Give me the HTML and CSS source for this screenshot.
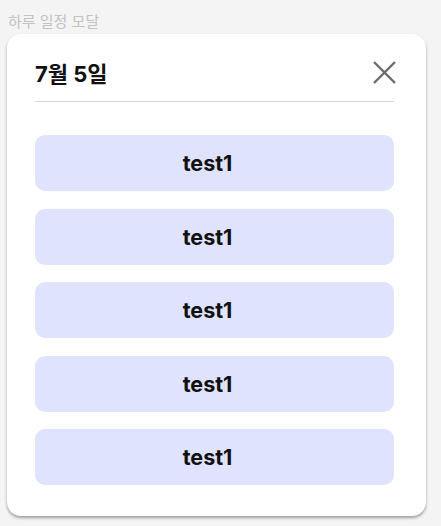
FILE: index.html
```html
<!DOCTYPE html>
<html lang="ko">
<head>
<meta charset="utf-8">
<link rel="stylesheet" href="styles.css">
</head>
<body>
<div class="label">하루 일정 모달</div>
<div class="modal">
  <div class="header">
    <h2 class="title">7월 5일</h2>
    <button class="close" aria-label="닫기">
      <svg width="25" height="25" viewBox="0 0 25 25"><path d="M2 2 L23 23 M23 2 L2 23" stroke="#6b6b6b" stroke-width="2.4" fill="none" stroke-linecap="butt"/></svg>
    </button>
  </div>
  <div class="list">
    <div class="item">test1</div>
    <div class="item">test1</div>
    <div class="item">test1</div>
    <div class="item">test1</div>
    <div class="item">test1</div>
  </div>
</div>
</body>
</html>
```
FILE: styles.css
```css
html, body {
  margin: 0;
  background: #f4f4f4;
}
body {
  padding: 0 0 8px 7px;
  font-family: Inter, "Noto Sans CJK KR", sans-serif;
}
.label {
  padding-left: 1px;
  height: 34px;
  line-height: 42px;
  font-size: 15px;
  color: #c2c2c2;
  font-family: "Noto Sans CJK KR", sans-serif;
}
.modal {
  width: 419px;
  box-sizing: border-box;
  background: #fff;
  border-radius: 14px;
  box-shadow: 0 2px 3px rgba(0,0,0,0.35);
  padding: 0 32px 31px 28px;
}
.header {
  display: flex;
  justify-content: space-between;
  align-items: flex-start;
  padding-top: 26px;
  height: 41px;
  box-sizing: content-box;
  border-bottom: 1px solid #d4d4d4;
}
.title {
  margin: 0;
  font-size: 22px;
  line-height: 28px;
  font-weight: 700;
  color: #111;
  font-family: Inter, "Noto Sans CJK KR", sans-serif;
}
.close {
  border: 0;
  background: none;
  padding: 0;
  width: 25px;
  height: 25px;
  margin-right: -3px;
  display: flex;
}
.list {
  display: flex;
  flex-direction: column;
  gap: 17.5px;
  padding-top: 33px;
}
.item {
  height: 56px;
  border-radius: 10px;
  background: #e0e3fd;
  display: flex;
  align-items: center;
  justify-content: center;
  padding-right: 14px;
  font-size: 21.5px;
  font-weight: 700;
  color: #111;
}
```
